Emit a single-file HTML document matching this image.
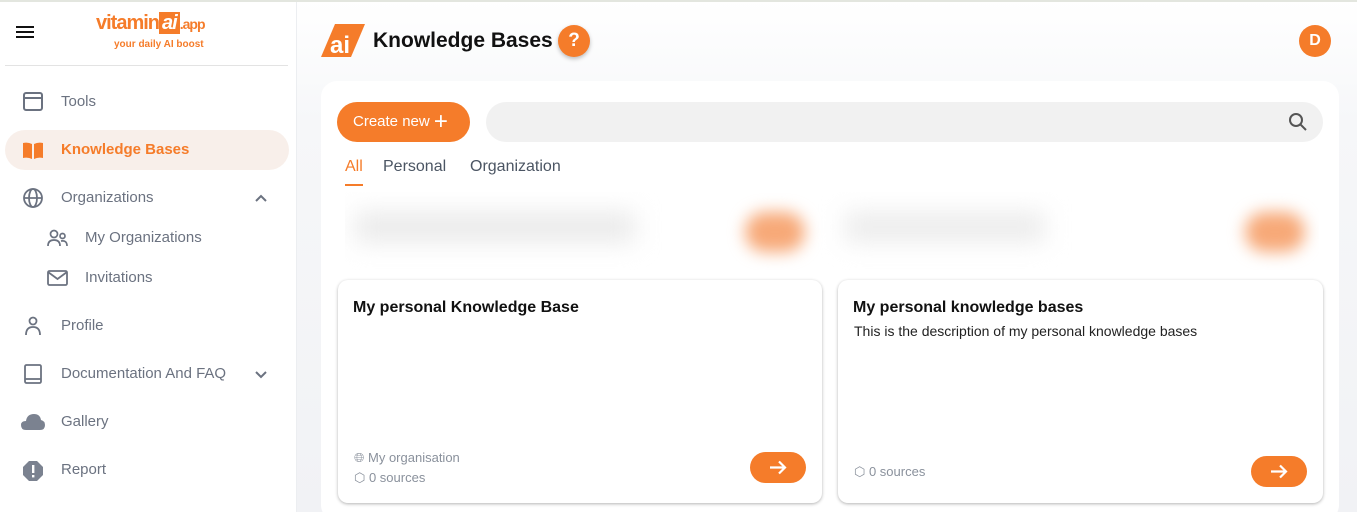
<!DOCTYPE html>
<html style="overflow:hidden;width:1357px;height:512px"><head><meta charset="utf-8"><style>
*{box-sizing:border-box;margin:0;padding:0}
body{width:1357px;height:512px;overflow:hidden;font-family:"Liberation Sans",sans-serif;background:#f3f4f6;position:relative}
.side{position:absolute;left:0;top:0;width:297px;height:512px;background:#fff;border-right:1px solid #eceef1}
.main{position:absolute;left:297px;top:0;width:1060px;height:512px;overflow:hidden;background:linear-gradient(#fff 0,#f6f7f9 120px,#f1f2f5)}
.nav{position:absolute;left:0;font-size:15px;color:#6b7280;display:flex;align-items:center}
.orange{color:#f57c2a}
.panel{position:absolute;left:24px;top:81px;width:1018px;height:440px;background:#fff;border-radius:16px}
.card{position:absolute;width:484px;height:223px;background:#fff;border-radius:10px;box-shadow:0 1px 3px rgba(0,0,0,.3)}
.card h3{position:absolute;left:15px;top:19px;font-size:16px;font-weight:bold;color:#111}
.meta{position:absolute;left:16px;font-size:13px;color:#8a919c;display:flex;align-items:center;gap:4px}
.go{position:absolute;right:16px;width:56px;height:31px;border-radius:16px;background:#f57c2a}
</style></head><body>
<div class="side">
 <div style="position:absolute;left:16px;top:26px;width:18px;height:2px;background:#111;box-shadow:0 5px 0 #111,0 10px 0 #111"></div>
 <div style="position:absolute;left:96px;top:12px;font-size:20px;font-weight:bold;color:#f57c2a;letter-spacing:-1px">vitamin<span style="background:#f57c2a;color:#fff;padding:0 3px;font-style:italic">ai</span><span style="font-size:14px">.app</span></div>
 <div style="position:absolute;left:114px;top:39px;font-size:10px;font-weight:bold;color:#f57c2a">your daily AI boost</div>
 <div style="position:absolute;left:5px;top:65px;width:283px;height:1px;background:#e3e3e3"></div>
 <div class="nav" style="top:93px;left:61px">Tools</div>
 <svg style="position:absolute;left:23px;top:92px" width="20" height="19" viewBox="0 0 20 19" fill="none" stroke="#6b7280" stroke-width="2"><rect x="1" y="1" width="18" height="17" rx="2"/><line x1="1" y1="6" x2="19" y2="6"/></svg>
 <div style="position:absolute;left:5px;top:130px;width:284px;height:40px;border-radius:20px;background:#f8efea"></div>
 <svg style="position:absolute;left:23px;top:142px" width="20" height="17" viewBox="0 0 20 17"><path d="M0 1 Q5 0 9 2 V17 Q5 15 0 16Z M11 2 Q15 0 20 1 V16 Q15 15 11 17Z" fill="#f57c2a"/></svg>
 <div class="nav orange" style="top:141px;left:61px;font-weight:bold">Knowledge Bases</div>
 <svg style="position:absolute;left:23px;top:188px" width="20" height="20" viewBox="0 0 20 20" fill="none" stroke="#6b7280" stroke-width="1.8"><circle cx="10" cy="10" r="9"/><ellipse cx="10" cy="10" rx="4" ry="9"/><line x1="1" y1="10" x2="19" y2="10"/></svg>
 <div class="nav" style="top:189px;left:61px">Organizations</div>
 <svg style="position:absolute;left:255px;top:194px" width="12" height="8" viewBox="0 0 12 8" fill="none" stroke="#6b7280" stroke-width="2"><path d="M1 7 L6 2 L11 7"/></svg>
 <svg style="position:absolute;left:47px;top:229px" width="21" height="18" viewBox="0 0 21 18" fill="none" stroke="#6b7280" stroke-width="1.7"><circle cx="7" cy="5" r="3.5"/><circle cx="15.5" cy="7" r="2.5"/><path d="M1 17 Q1 11 7 11 Q13 11 13 17 M14 12 Q20 11 20 17"/></svg>
 <div class="nav" style="top:229px;left:85px">My Organizations</div>
 <svg style="position:absolute;left:47px;top:270px" width="21" height="16" viewBox="0 0 21 16" fill="none" stroke="#6b7280" stroke-width="1.8"><rect x="1" y="1" width="19" height="14" rx="1.5"/><path d="M1 2 L10.5 9 L20 2"/></svg>
 <div class="nav" style="top:269px;left:85px">Invitations</div>
 <svg style="position:absolute;left:25px;top:316px" width="16" height="20" viewBox="0 0 16 20" fill="none" stroke="#6b7280" stroke-width="1.8"><circle cx="8" cy="5" r="3.5"/><path d="M1 19 Q1 11 8 11 Q15 11 15 19"/></svg>
 <div class="nav" style="top:317px;left:61px">Profile</div>
 <svg style="position:absolute;left:24px;top:364px" width="18" height="20" viewBox="0 0 18 20" fill="none" stroke="#6b7280" stroke-width="1.8"><rect x="1" y="1" width="16" height="18" rx="1.5"/><line x1="1" y1="15" x2="17" y2="15"/></svg>
 <div class="nav" style="top:365px;left:61px">Documentation And FAQ</div>
 <svg style="position:absolute;left:255px;top:371px" width="12" height="8" viewBox="0 0 12 8" fill="none" stroke="#6b7280" stroke-width="2"><path d="M1 1 L6 6 L11 1"/></svg>
 <svg style="position:absolute;left:21px;top:413px" width="24" height="17" viewBox="0 0 24 17"><path d="M5 17 Q0 17 0 12 Q0 8 5 8 Q6 1 13 1 Q19 1 20 7 Q24 8 24 12 Q24 17 19 17Z" fill="#7b8290"/></svg>
 <div class="nav" style="top:413px;left:61px">Gallery</div>
 <svg style="position:absolute;left:23px;top:461px" width="20" height="20" viewBox="0 0 20 20"><path d="M6 0 H14 L20 6 V14 L14 20 H6 L0 14 V6Z" fill="#7b8290"/><rect x="9" y="4" width="2.4" height="8" fill="#fff"/><rect x="9" y="14" width="2.4" height="2.4" fill="#fff"/></svg>
 <div class="nav" style="top:461px;left:61px">Report</div>
</div>
<div class="main">
 <svg style="position:absolute;left:24px;top:24px" width="44" height="33" viewBox="0 0 44 33"><path d="M14 0 H44 L30 33 H0Z" fill="#f57c2a"/><text x="9" y="29" font-family="Liberation Sans" font-weight="bold" font-size="24" fill="#fff">ai</text></svg>
 <div style="position:absolute;left:76px;top:29px;font-size:21px;font-weight:bold;color:#111">Knowledge Bases</div>
 <div style="position:absolute;left:261px;top:25px;width:32px;height:32px;border-radius:50%;background:#f57c2a;color:#fff;font-weight:bold;font-size:19px;text-align:center;line-height:32px;box-shadow:0 2px 4px rgba(0,0,0,.25)">?</div>
 <div style="position:absolute;left:1002px;top:25px;width:32px;height:32px;border-radius:50%;background:#f57c2a;color:#fff;font-weight:bold;font-size:16px;text-align:center;line-height:32px">D</div>
 <div class="panel">
  <div style="position:absolute;left:16px;top:21px;width:133px;height:40px;border-radius:20px;background:#f57c2a;color:#fff;font-size:15px;line-height:40px;padding-left:16px">Create new <span style="font-size:24px;vertical-align:-3px">+</span></div>
  <div style="position:absolute;left:165px;top:21px;width:837px;height:40px;border-radius:20px;background:#f1f1f1"></div>
  <svg style="position:absolute;left:967px;top:31px" width="20" height="20" viewBox="0 0 20 20" fill="none" stroke="#555" stroke-width="2"><circle cx="8" cy="8" r="6"/><line x1="12.5" y1="12.5" x2="18" y2="18"/></svg>
  <div style="position:absolute;left:24px;top:77px;font-size:16px;color:#f57c2a">All</div>
  <div style="position:absolute;left:24px;top:103px;width:18px;height:2px;background:#f57c2a"></div>
  <div style="position:absolute;left:62px;top:77px;font-size:16px;color:#4b5563">Personal</div>
  <div style="position:absolute;left:149px;top:77px;font-size:16px;color:#4b5563">Organization</div>
  <div style="position:absolute;left:24px;top:111px;width:974px;height:78px;background:#fff;overflow:hidden">
   <div style="position:absolute;left:10px;top:20px;width:280px;height:30px;background:#eaeaea;filter:blur(12px)"></div>
   <div style="position:absolute;left:400px;top:20px;width:60px;height:40px;border-radius:20px;background:#f7a978;filter:blur(8px)"></div>
   <div style="position:absolute;left:500px;top:20px;width:200px;height:30px;background:#ececec;filter:blur(12px)"></div>
   <div style="position:absolute;left:900px;top:20px;width:60px;height:40px;border-radius:20px;background:#f7a978;filter:blur(8px)"></div>
  </div>
 </div>
 <div class="card" style="left:41px;top:280px">
  <h3>My personal Knowledge Base</h3>
  <div class="meta" style="top:170px">🌐︎ My organisation</div>
  <div class="meta" style="top:190px">⬡ 0 sources</div>
  <div class="go" style="top:172px"><svg width="56" height="31" viewBox="0 0 56 31" fill="none" stroke="#fff" stroke-width="2.2"><path d="M20 15.5 H35 M29 9.5 L35 15.5 L29 21.5"/></svg></div>
 </div>
 <div class="card" style="left:541px;top:280px;width:485px">
  <h3>My personal knowledge bases</h3>
  <div style="position:absolute;left:16px;top:43px;font-size:14px;color:#222">This is the description of my personal knowledge bases</div>
  <div class="meta" style="top:184px">⬡ 0 sources</div>
  <div class="go" style="top:176px"><svg width="56" height="31" viewBox="0 0 56 31" fill="none" stroke="#fff" stroke-width="2.2"><path d="M20 15.5 H35 M29 9.5 L35 15.5 L29 21.5"/></svg></div>
 </div>
</div>
<div style="position:absolute;left:0;top:0;width:1357px;height:2px;background:#e3e6df"></div>
</body></html>
